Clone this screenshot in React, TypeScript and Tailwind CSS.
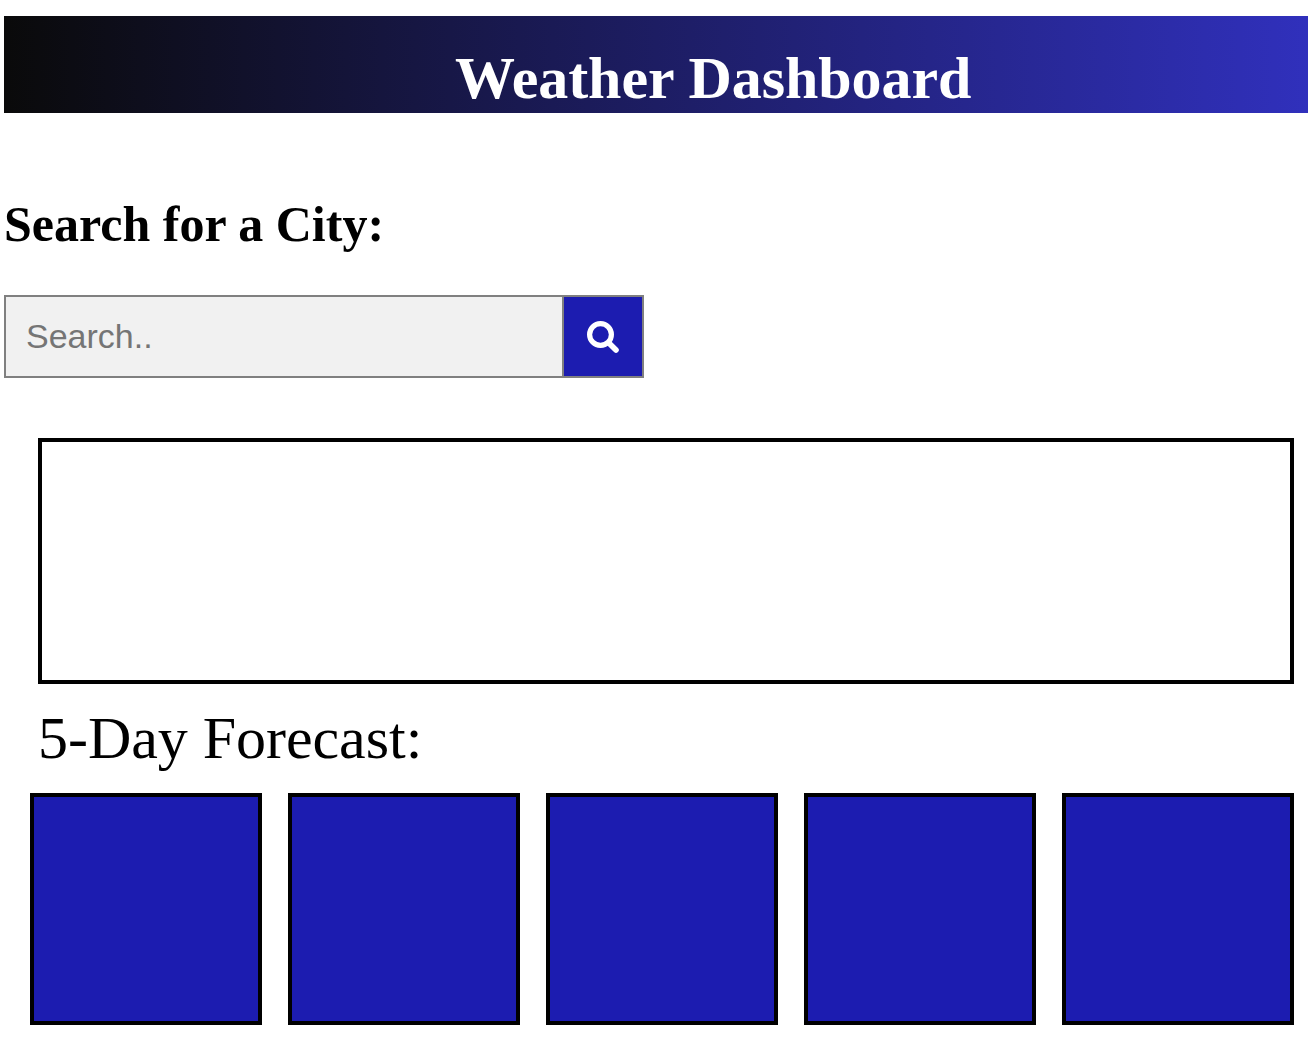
const forecastDays = [1, 2, 3, 4, 5];

function SearchIcon() {
  return (
    <svg width="34" height="34" viewBox="0 0 34 34" fill="none" stroke="white" strokeLinecap="round">
      <circle cx="14.5" cy="14.5" r="10.9" strokeWidth="5.2" />
      <path d="M23.4 23.4 L30 30" strokeWidth="5.6" />
    </svg>
  );
}

export default function App() {
  return (
    <div className="flex h-[1040px] w-[1308px] flex-col overflow-hidden bg-white pt-4 pl-1 font-['Liberation_Serif',serif] text-black antialiased">
      <header className="h-[97px] shrink-0 bg-[linear-gradient(to_right,#0a0a0a,#3030bc)] pt-7 pl-[451px]">
        <h1 className="text-[60px] leading-[68px] font-bold tracking-[-0.05px] whitespace-nowrap text-white">Weather Dashboard</h1>
      </header>

      <section className="shrink-0 pt-[83px]">
        <h2 className="text-[50px] leading-14 font-bold">Search for a City:</h2>
        <form className="mt-[43px] flex h-[83px] w-[640px]" onSubmit={(e) => e.preventDefault()}>
          <input
            type="text"
            placeholder="Search.."
            className="w-[558px] border-2 border-r-0 border-[#808080] bg-[#f1f1f1] px-5 font-['Liberation_Sans',sans-serif] text-[34px] outline-none placeholder:text-[#757575]"
          />
          <button
            type="submit"
            aria-label="Search"
            className="flex w-[82px] items-center justify-center border-2 border-[#808080] bg-[#1c1cb0]"
          >
            <SearchIcon />
          </button>
        </form>
      </section>

      <main className="mt-[60px] mr-3.5 shrink-0">
        <div className="ml-[34px] h-[246px] border-4 border-black" />
        <h3 className="mt-5 ml-[34px] text-[60px] leading-[68px] tracking-[-0.04px]">5-Day Forecast:</h3>
        <div className="mt-[21px] ml-[26px] grid grid-cols-5 gap-[26px]">
          {forecastDays.map((day) => (
            <div key={day} className="h-[232px] border-4 border-black bg-[#1c1cb0]" />
          ))}
        </div>
      </main>
    </div>
  );
}
